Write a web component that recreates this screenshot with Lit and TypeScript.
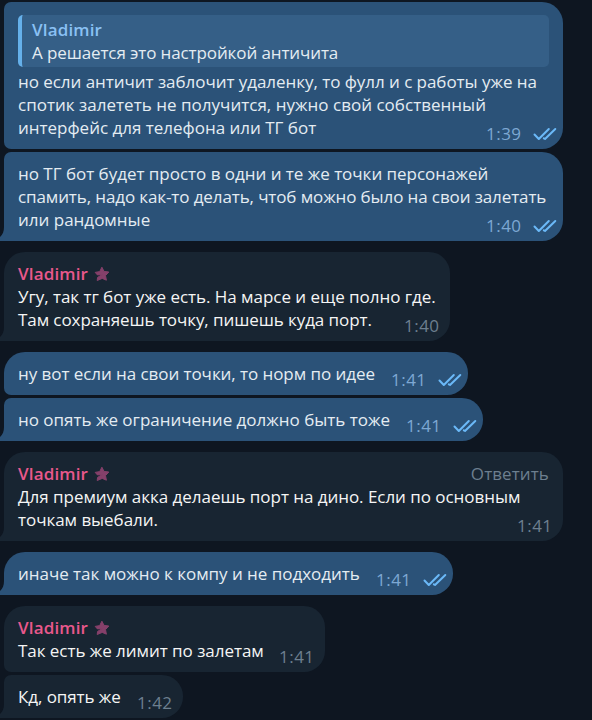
import { LitElement, html, svg, css, nothing } from "lit";
import { customElement, property } from "lit/decorators.js";
import { classMap } from "lit/directives/class-map.js";
import { styleMap } from "lit/directives/style-map.js";

interface Line {
  text: string;
  // letter spacing in px
  track?: number;
}

interface Message {
  out?: boolean;
  first?: boolean;
  last?: boolean;
  author?: string;
  reply?: string;
  quote?: { name: string; line: Line };
  lines: Line[];
  time: string;
  width: number;
}

const MESSAGES: Message[] = [
  {
    out: true,
    quote: { name: "Vladimir", line: { text: "А решается это настройкой античита", track: -0.11 } },
    lines: [
      { text: "но если античит заблочит удаленку, то фулл и с работы уже на", track: -0.045 },
      { text: "спотик залететь не получится, нужно свой собственный", track: 0.02 },
      { text: "интерфейс для телефона или ТГ бот", track: -0.01 },
    ],
    time: "1:39",
    width: 559,
  },
  {
    out: true,
    last: true,
    lines: [
      { text: "но ТГ бот будет просто в одни и те же точки персонажей", track: -0.02 },
      { text: "спамить, надо как-то делать, чтоб можно было на свои залетать", track: -0.11 },
      { text: "или рандомные" },
    ],
    time: "1:40",
    width: 559,
  },
  {
    first: true,
    last: true,
    author: "Vladimir",
    lines: [
      { text: "Угу, так тг бот уже есть. На марсе и еще полно где.", track: -0.04 },
      { text: "Там сохраняешь точку, пишешь куда порт.", track: -0.08 },
    ],
    time: "1:40",
    width: 446,
  },
  {
    out: true,
    first: true,
    lines: [{ text: "ну вот если на свои точки, то норм по идее", track: -0.06 }],
    time: "1:41",
    width: 464,
  },
  {
    out: true,
    last: true,
    lines: [{ text: "но опять же ограничение должно быть тоже", track: -0.01 }],
    time: "1:41",
    width: 479,
  },
  {
    first: true,
    last: true,
    author: "Vladimir",
    reply: "Ответить",
    lines: [
      { text: "Для премиум акка делаешь порт на дино. Если по основным", track: -0.04 },
      { text: "точкам выебали.", track: -0.04 },
    ],
    time: "1:41",
    width: 559,
  },
  {
    out: true,
    first: true,
    last: true,
    lines: [{ text: "иначе так можно к компу и не подходить", track: -0.03 }],
    time: "1:41",
    width: 449,
  },
  {
    first: true,
    author: "Vladimir",
    lines: [{ text: "Так есть же лимит по залетам", track: -0.04 }],
    time: "1:41",
    width: 321,
  },
  { last: true, lines: [{ text: "Кд, опять же", track: -0.08 }], time: "1:42", width: 179 },
];

const star = svg`<path d="M7.9 1.2 L10 5.4 L14.8 6 L11.5 9.6 L12.4 14.2 L8.2 12.4 L3.2 14.5 L3.6 11.4 L8.4 8.5 L3.4 8.9 L1.2 6.4 L5.7 5.6 Z"
  stroke-width="1" stroke-linejoin="round"/>`;

const renderLine = (line: Line) =>
  html`<div class="line" style=${styleMap({ letterSpacing: `${line.track ?? 0}px` })}>${line.text}</div>`;

@customElement("chat-message")
export class ChatMessage extends LitElement {
  @property({ attribute: false }) message!: Message;

  static styles = css`
    :host { display: block; }
    .bubble {
      position: relative;
      box-sizing: border-box;
      padding: 10px 14px;
      border-radius: 7px 21px 21px 7px;
      background: #182532;
      color: #f5f5f5;
      --fill: #182532;
    }
    .out { background: #2b5278; color: #e4ecf2; --fill: #2b5278; }
    .first { border-top-left-radius: 21px; }
    .last { border-bottom-left-radius: 0; }
    .quoted { padding-top: 13px; }
    .tail { position: absolute; left: -4px; bottom: 0; width: 4px; height: 14px; fill: var(--fill); }
    .quote {
      box-sizing: border-box;
      height: 52px;
      margin-bottom: 3px;
      padding: 3px 10px;
      border-left: 4px solid #65b0ea;
      border-radius: 5px;
      background: #355f87;
    }
    .line { height: 23px; line-height: 23px; white-space: nowrap; }
    .head { display: flex; align-items: center; height: 23px; line-height: 23px; }
    .name { font-weight: 600; letter-spacing: 0.15px; }
    .author { color: #e9588c; }
    .quote-name { color: #8ac1f4; }
    .star { width: 16px; height: 16px; margin-left: 5.5px; fill: #85406a; stroke: #85406a; }
    .reply { margin-left: auto; color: #6d7f8f; letter-spacing: 0.1px; }
    .meta {
      position: absolute;
      right: 10.5px;
      bottom: 4px;
      display: flex;
      align-items: center;
      height: 23px;
      line-height: 23px;
      color: #6d7f8f;
    }
    .time { letter-spacing: 0.45px; }
    .out .meta { right: 6.5px; color: #7da8d3; }
    .ticks { width: 24px; height: 14px; margin-left: 11px; fill: none; stroke: #6bb9f8; stroke-width: 2; stroke-linecap: round; stroke-linejoin: round; }
  `;

  render() {
    const m = this.message;
    const classes = { bubble: true, out: !!m.out, first: !!m.first, last: !!m.last, quoted: !!m.quote };
    return html`<div class=${classMap(classes)} style=${styleMap({ width: `${m.width}px` })}>
      ${m.last ? html`<svg class="tail" viewBox="0 0 4 14"><path d="M4 0 C4 4.5 2.8 7.5 0 10 V14 H4Z" /></svg>` : nothing}
      ${m.quote
        ? html`<div class="quote">
            <div class="line name quote-name">${m.quote.name}</div>
            ${renderLine(m.quote.line)}
          </div>`
        : nothing}
      ${m.author
        ? html`<div class="head">
            <span class="name author">${m.author}</span>
            <svg class="star" viewBox="0 0 16 16">${star}</svg>
            ${m.reply ? html`<span class="reply">${m.reply}</span>` : nothing}
          </div>`
        : nothing}
      ${m.lines.map(renderLine)}
      <div class="meta">
        <span class="time">${m.time}</span>
        ${m.out
          ? html`<svg class="ticks" viewBox="0 0 24 14"><path d="M1.5 7.5 L5.8 12 L15.8 2 M10.8 11.3 L12 12 L22.3 2" /></svg>`
          : nothing}
      </div>
    </div>`;
  }
}

@customElement("app-root")
export class AppRoot extends LitElement {
  static styles = css`
    :host {
      display: block;
      box-sizing: border-box;
      height: 720px;
      overflow: hidden;
      padding: 2px 4px;
      background: #0e1621;
      font: 17px/23px "Open Sans", "Noto Sans", sans-serif;
    }
    .list { display: flex; flex-direction: column; gap: 3px; }
    .group-start { margin-top: 8px; }
  `;

  render() {
    return html`<div class="list">
      ${MESSAGES.map((m) => html`<chat-message class=${classMap({ "group-start": !!m.first })} .message=${m}></chat-message>`)}
    </div>`;
  }
}
